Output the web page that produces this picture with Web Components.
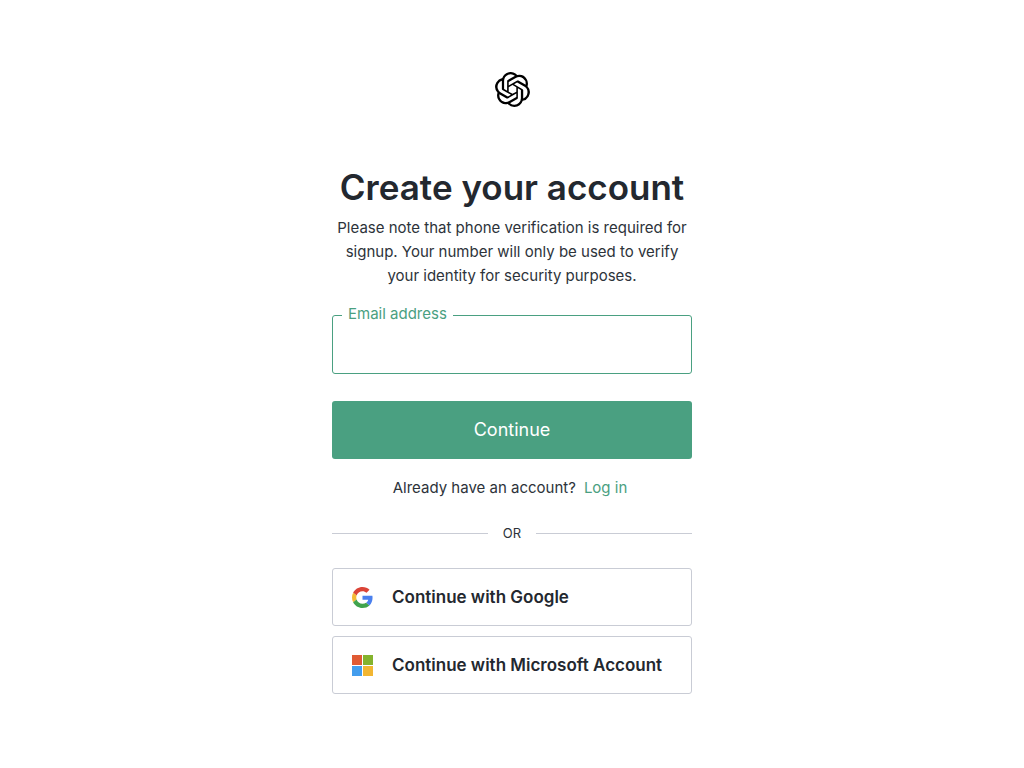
<!DOCTYPE html>
<html lang="en">
<head>
<meta charset="utf-8">
<meta name="viewport" content="width=device-width, initial-scale=1">
<title>Create your account</title>
<style>
  body {
    margin: 0;
    background: #fff;
    color: #2d333a;
    font-family: Inter, "Liberation Sans", sans-serif;
    font-size: 15px;
    line-height: 24px;
    --accent: #4aa081;
    --line: #c9ccd5;
    --strong: #23282f;
  }
</style>
</head>
<body>
<signup-page></signup-page>

<template id="signup-page">
  <style>
    :host { display: block; padding: 72px 16px; }
    main { max-width: 360px; margin: 0 auto; display: flex; flex-direction: column; }
    brand-logo { align-self: center; margin-bottom: 60px; }
    h1 { margin: 0 0 9px; font-size: 35px; line-height: 40px; font-weight: 600; text-align: center; white-space: nowrap; color: var(--strong); }
    p { margin: 0; text-align: center; }
    form { display: flex; flex-direction: column; gap: 27px; margin: 27px 0 17px; }
    .login { display: flex; justify-content: center; gap: 8px; padding-right: 4px; }
    a { color: var(--accent); text-decoration: none; }
    text-divider { margin: 21px 0 23px; }
    .providers { display: grid; gap: 10px; }
  </style>
  <main>
    <brand-logo></brand-logo>
    <h1>Create your account</h1>
    <p>Please note that phone verification is required for signup. Your number will only be used to verify your identity for security purposes.</p>
    <form>
      <text-field label="Email address"></text-field>
      <primary-button>Continue</primary-button>
    </form>
    <div class="login"><span>Already have an account?</span><a href="#login">Log in</a></div>
    <text-divider>OR</text-divider>
    <div class="providers">
      <provider-button>
        <svg slot="icon" viewBox="0 0 48 48" width="21" height="21" aria-hidden="true">
          <path fill="#db4437" d="M24 9.5c3.54 0 6.71 1.22 9.21 3.6l6.85-6.85C35.9 2.38 30.47 0 24 0 14.62 0 6.51 5.38 2.56 13.22l7.98 6.19C12.43 13.72 17.74 9.5 24 9.5z"/>
          <path fill="#4a80ee" d="M46.98 24.55c0-1.57-.15-3.09-.38-4.55H24v9.02h12.94c-.58 2.96-2.26 5.48-4.78 7.18l7.73 6c4.51-4.18 7.09-10.36 7.09-17.65z"/>
          <path fill="#f4bb35" d="M10.53 28.59c-.48-1.45-.76-2.99-.76-4.59s.27-3.14.76-4.59l-7.98-6.19C.92 16.46 0 20.12 0 24c0 3.88.92 7.54 2.56 10.78l7.97-6.19z"/>
          <path fill="#40a34d" d="M24 48c6.48 0 11.93-2.13 15.89-5.81l-7.73-6c-2.15 1.45-4.92 2.3-8.16 2.3-6.26 0-11.57-4.22-13.47-9.91l-7.98 6.19C6.51 42.62 14.62 48 24 48z"/>
        </svg>
        Continue with Google
      </provider-button>
      <provider-button>
        <svg slot="icon" viewBox="0 0 21 21" width="21" height="21" aria-hidden="true">
          <path fill="#e05a33" d="M0 0h10v10H0z"/>
          <path fill="#84b32d" d="M11 0h10v10H11z"/>
          <path fill="#439ded" d="M0 11h10v10H0z"/>
          <path fill="#f2b632" d="M11 11h10v10H11z"/>
        </svg>
        Continue with Microsoft Account
      </provider-button>
    </div>
  </main>
</template>

<template id="brand-logo">
  <style>
    :host { display: block; color: #000; }
    svg { display: block; }
  </style>
  <svg viewBox="0 0 24 24" width="35" height="35" fill="currentColor" role="img" aria-label="OpenAI"><path d="M22.2819 9.8211a5.9847 5.9847 0 0 0-.5157-4.9108 6.0462 6.0462 0 0 0-6.5098-2.9A6.0651 6.0651 0 0 0 4.9807 4.1818a5.9847 5.9847 0 0 0-3.9977 2.9 6.0462 6.0462 0 0 0 .7427 7.0966 5.98 5.98 0 0 0 .511 4.9107 6.051 6.051 0 0 0 6.5146 2.9001A5.9847 5.9847 0 0 0 13.2599 24a6.0557 6.0557 0 0 0 5.7718-4.2058 5.9894 5.9894 0 0 0 3.9977-2.9001 6.0557 6.0557 0 0 0-.7475-7.0729zm-9.022 12.6081a4.4755 4.4755 0 0 1-2.8764-1.0408l.1419-.0804 4.7783-2.7582a.7948.7948 0 0 0 .3927-.6813v-6.7369l2.02 1.1686a.071.071 0 0 1 .038.052v5.5826a4.504 4.504 0 0 1-4.4945 4.4944zm-9.6607-4.1254a4.4708 4.4708 0 0 1-.5346-3.0137l.142.0852 4.783 2.7582a.7712.7712 0 0 0 .7806 0l5.8428-3.3685v2.3324a.0804.0804 0 0 1-.0332.0615L9.74 19.9502a4.4992 4.4992 0 0 1-6.1408-1.6464zM2.3408 7.8956a4.485 4.485 0 0 1 2.3655-1.9728V11.6a.7664.7664 0 0 0 .3879.6765l5.8144 3.3543-2.0201 1.1685a.0757.0757 0 0 1-.071 0l-4.8303-2.7865A4.504 4.504 0 0 1 2.3408 7.872zm16.5963 3.8558L13.1038 8.364 15.1192 7.2a.0757.0757 0 0 1 .071 0l4.8303 2.7913a4.4944 4.4944 0 0 1-.6765 8.1042v-5.6772a.79.79 0 0 0-.407-.667zm2.0107-3.0231l-.142-.0852-4.7735-2.7818a.7759.7759 0 0 0-.7854 0L9.409 9.2297V6.8974a.0662.0662 0 0 1 .0284-.0615l4.8303-2.7866a4.4992 4.4992 0 0 1 6.6802 4.66zM8.3065 12.863l-2.02-1.1638a.0804.0804 0 0 1-.038-.0567V6.0742a4.4992 4.4992 0 0 1 7.3757-3.4537l-.142.0805L8.704 5.459a.7948.7948 0 0 0-.3927.6813zm1.0976-2.3654l2.602-1.4998 2.6069 1.4998v2.9994l-2.5974 1.4997-2.6067-1.4997Z"/></svg>
</template>

<template id="text-field">
  <style>
    :host { display: block; position: relative; color: var(--accent); }
    /* The label sits over the top border of the box. */
    label { position: absolute; top: -13px; left: 10px; padding: 0 6px; background: #fff; }
    input { display: block; box-sizing: border-box; width: 100%; height: 59px; padding: 0 16px; border: 1px solid var(--accent); border-radius: 3px; outline: 0; background: #fff; color: #2d333a; font: inherit; }
  </style>
  <label for="box"></label>
  <input id="box" type="email" autocomplete="email">
</template>

<template id="primary-button">
  <style>
    :host { display: block; }
    button { display: block; width: 100%; padding: 17px 16px; border: 0; border-radius: 3px; background: var(--accent); color: #fff; font: inherit; font-size: 18px; cursor: pointer; }
  </style>
  <button type="button"><slot></slot></button>
</template>

<template id="text-divider">
  <style>
    :host { display: flex; align-items: center; gap: 15px; font-size: 13px; }
    :host::before, :host::after { content: ""; flex: 1; height: 1px; background: var(--line); }
  </style>
  <slot></slot>
</template>

<template id="provider-button">
  <style>
    :host { display: block; }
    button { display: flex; align-items: center; gap: 19px; width: 100%; padding: 16px 19px; border: 1px solid var(--line); border-radius: 3px; background: #fff; color: var(--strong); font: inherit; font-size: 17px; font-weight: 600; white-space: nowrap; cursor: pointer; }
    ::slotted(svg) { display: block; flex: none; }
  </style>
  <button type="button"><slot name="icon"></slot><span><slot></slot></span></button>
</template>

<script>
  class TemplateElement extends HTMLElement {
    constructor() {
      super();
      const template = document.getElementById(this.localName);
      this.attachShadow({ mode: "open" }).append(template.content.cloneNode(true));
    }
  }
  class TextField extends TemplateElement {
    connectedCallback() {
      this.shadowRoot.querySelector("label").textContent = this.getAttribute("label");
    }
  }
  customElements.define("brand-logo", class extends TemplateElement {});
  customElements.define("text-field", TextField);
  customElements.define("primary-button", class extends TemplateElement {});
  customElements.define("text-divider", class extends TemplateElement {});
  customElements.define("provider-button", class extends TemplateElement {});
  customElements.define("signup-page", class extends TemplateElement {});
</script>
</body>
</html>
